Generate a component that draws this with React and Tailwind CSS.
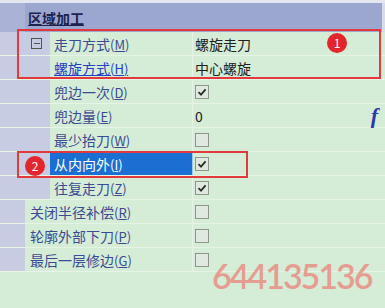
import React from 'react';

const rows = [
  { name: '走刀方式', key: 'M', depth: 2, toggle: true, value: '螺旋走刀' },
  { name: '螺旋方式', key: 'H', depth: 2, value: '中心螺旋', link: true },
  { name: '兜边一次', key: 'D', depth: 2, check: true },
  { name: '兜边量', key: 'E', depth: 2, value: '0', fx: true },
  { name: '最少抬刀', key: 'W', depth: 2, check: false },
  { name: '从内向外', key: 'I', depth: 2, check: true, selected: true },
  { name: '往复走刀', key: 'Z', depth: 2, check: true },
  { name: '关闭半径补偿', key: 'R', depth: 1, check: false },
  { name: '轮廓外部下刀', key: 'P', depth: 1, check: false },
  { name: '最后一层修边', key: 'G', depth: 1, check: false },
];

const Check = ({ on }) => (
  <div className="w-[14px] h-[14px] border border-[#8d958d] bg-[#dfe9df] flex items-center justify-center">
    {on && (
      <svg width="10" height="10" viewBox="0 0 10 10">
        <path d="M1.5 5.2 L4 7.6 L8.6 2.4" fill="none" stroke="#2b302b" strokeWidth="1.8" />
      </svg>
    )}
  </div>
);

const Row = ({ r }) => {
  const nameColor = r.selected ? 'text-white' : r.link ? 'text-[#2141c8]' : 'text-[#3a4b93]';
  return (
    <div className="flex h-6 border-b border-[#e6f4e6]">
      <div className={`${r.depth === 2 ? 'w-[50px]' : 'w-[25px]'} bg-[#c8cce3] flex items-center shrink-0`}>
        {r.toggle && (
          <div className="ml-[31px] w-[11px] h-[11px] border-[1.5px] border-[#4c564c] flex items-center justify-center">
            <div className="w-[6px] h-[1.5px] bg-[#4c564c]" />
          </div>
        )}
      </div>
      <div
        className={`${r.depth === 2 ? 'w-[142px] pl-[4px]' : 'w-[167px] pl-[5px]'} flex items-center ${r.selected ? 'bg-[#1c6fd2]' : ''}`}
      >
        <span className={`text-[14px] leading-none ${nameColor} ${r.link ? 'underline' : ''}`}>
          {r.name}
          <span className="text-[13px]">
            (<span className="underline">{r.key}</span>)
          </span>
        </span>
      </div>
      <div className={`w-px ${r.selected ? 'bg-[#9cc9ee]' : 'bg-[#e6f4e6]'}`} />
      <div className="flex-1 flex items-center justify-between pl-[2px] pr-[7px]">
        {r.value !== undefined ? (
          <span className="text-[14px] text-[#1f221f] leading-none">{r.value}</span>
        ) : (
          <Check on={r.check} />
        )}
        {r.fx && (
          <span className="text-[22px] font-bold italic text-[#2a37ad] leading-none" style={{ fontFamily: '"Liberation Serif", serif' }}>
            f
          </span>
        )}
      </div>
    </div>
  );
};

export default function App() {
  return (
    <div
      className="relative w-[385px] h-[308px] overflow-hidden bg-[#d5ecd6]"
      style={{ fontFamily: '"Noto Sans CJK SC", "Noto Sans", sans-serif' }}
    >
      <div className="h-[3px] bg-[#e4e7ef]" />
      <div className="flex h-[29px]">
        <div className="w-[25px] bg-[#aab3d6]" />
        <div className="flex-1 bg-[#9ca7cf] flex items-center pl-[3px]">
          <span className="text-[14px] font-bold text-[#1c2350] underline leading-none">区域加工</span>
        </div>
        <div className="w-[3px] bg-[#d8dce8]" />
      </div>
      <div>
        {rows.map((r) => (
          <Row key={r.name} r={r} />
        ))}
      </div>

      {/* annotations */}
      <div className="absolute left-[17px] top-[29px] w-[364px] h-[50px] border-2 border-[#e23a3c]" />
      <div className="absolute left-[327px] top-[33px] w-[20px] h-[20px] rounded-full bg-[#e3262c] text-white text-[12px] flex items-center justify-center leading-none">
        1
      </div>
      <div className="absolute left-[17px] top-[151px] w-[231px] h-[27px] border-2 border-[#e23a3c]" />
      <div className="absolute left-[25px] top-[156px] w-[20px] h-[20px] rounded-full bg-[#e3262c] text-white text-[12px] flex items-center justify-center leading-none">
        2
      </div>
      <div
        className="absolute left-[212px] top-[259px] text-[34px] font-semibold text-[#e8958a] leading-none tracking-[-2px] opacity-90"
        style={{ fontFamily: 'Lato, sans-serif' }}
      >
        644135136
      </div>
    </div>
  );
}
